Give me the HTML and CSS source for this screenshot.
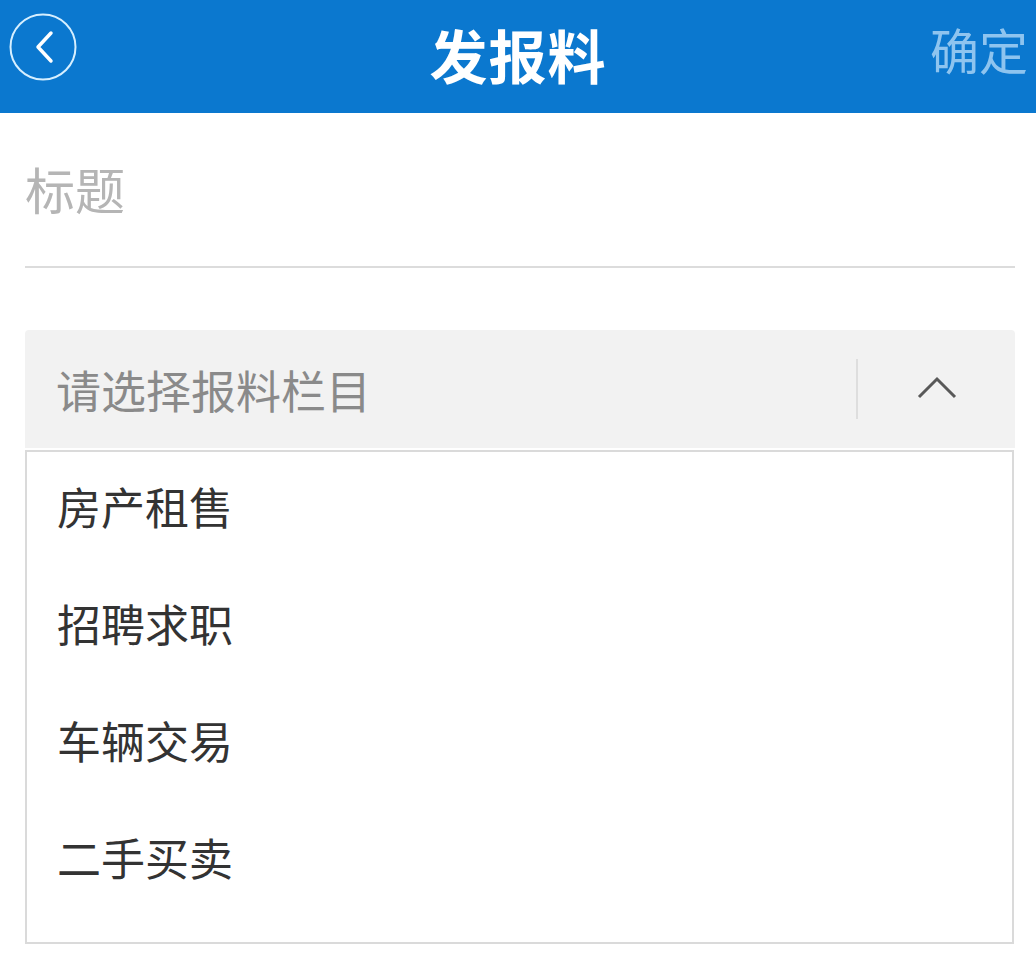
FILE: index.html
```html
<html>
    <head>
        <meta charset="UTF-8" />
        <link rel="stylesheet" href="styles.css">
    </head>
    <body>
        <div class="header">
            <div class="back">
                <svg width="68" height="68" viewBox="0 0 68 68">
                    <circle cx="34" cy="34" r="32.5" fill="none" stroke="#d6efff" stroke-width="2"/>
                    <path d="M42 20 L29 34 L42 48" fill="none" stroke="#ffffff" stroke-width="3.5" stroke-linecap="round" stroke-linejoin="round"/>
                </svg>
            </div>
            <div class="title">发报料</div>
            <div class="confirm">确定</div>
        </div>
        <div class="form">
            <div class="field_title">标题</div>
            <div class="select">
                <div class="select_text">请选择报料栏目</div>
                <div class="select_arrow">
                    <svg width="40" height="24" viewBox="0 0 40 24">
                        <path d="M2 22 L20 4 L38 22" fill="none" stroke="#595959" stroke-width="3"/>
                    </svg>
                </div>
            </div>
            <div class="options">
                <div class="option">房产租售</div>
                <div class="option">招聘求职</div>
                <div class="option">车辆交易</div>
                <div class="option">二手买卖</div>
            </div>
        </div>
    </body>
</html>
```

FILE: styles.css
```css
body {
    margin: 0;
    font-family: "Noto Sans CJK SC", "Noto Sans", sans-serif;
    background: #fff;
}
* {
    box-sizing: border-box;
}

.header {
    height: 113px;
    background: #0b78cf;
    display: grid;
    grid-template-columns: 1fr auto 1fr;
    align-items: start;
}

.back {
    padding: 13px 0 0 9px;
}
.back svg {
    display: block;
}

.title {
    color: #fff;
    font-size: 58px;
    font-weight: bold;
    line-height: 58px;
    margin-top: 25px;
    letter-spacing: 1px;
}

.confirm {
    justify-self: end;
    color: #8ec4ef;
    font-size: 49px;
    line-height: 49px;
    margin-top: 24px;
    padding-right: 8px;
}

.form {
    padding: 0 21px 0 25px;
}

.field_title {
    height: 155px;
    display: flex;
    align-items: center;
    font-size: 50px;
    color: #b5b5b5;
    border-bottom: 2px solid #dcdcdc;
    padding-bottom: 4px;
}

.select {
    margin-top: 62px;
    height: 118px;
    background: #f2f2f2;
    border-radius: 4px 4px 0 0;
    display: flex;
    align-items: center;
}
.select_text {
    flex: 1;
    padding-left: 31px;
    font-size: 45px;
    color: #8a8a8a;
}
.select_arrow {
    width: 159px;
    height: 60px;
    border-left: 2px solid #dedede;
    display: flex;
    align-items: center;
    justify-content: center;
}
.select_arrow svg {
    display: block;
    margin-top: -4px;
}

.options {
    margin-top: 2px;
    border: 2px solid #dadada;
    margin-right: 1px;
    padding: 0 0 22px;
}
.option {
    height: 117px;
    display: flex;
    align-items: center;
    padding: 0 0 10px 30px;
    font-size: 44px;
    color: #333;
}
```
